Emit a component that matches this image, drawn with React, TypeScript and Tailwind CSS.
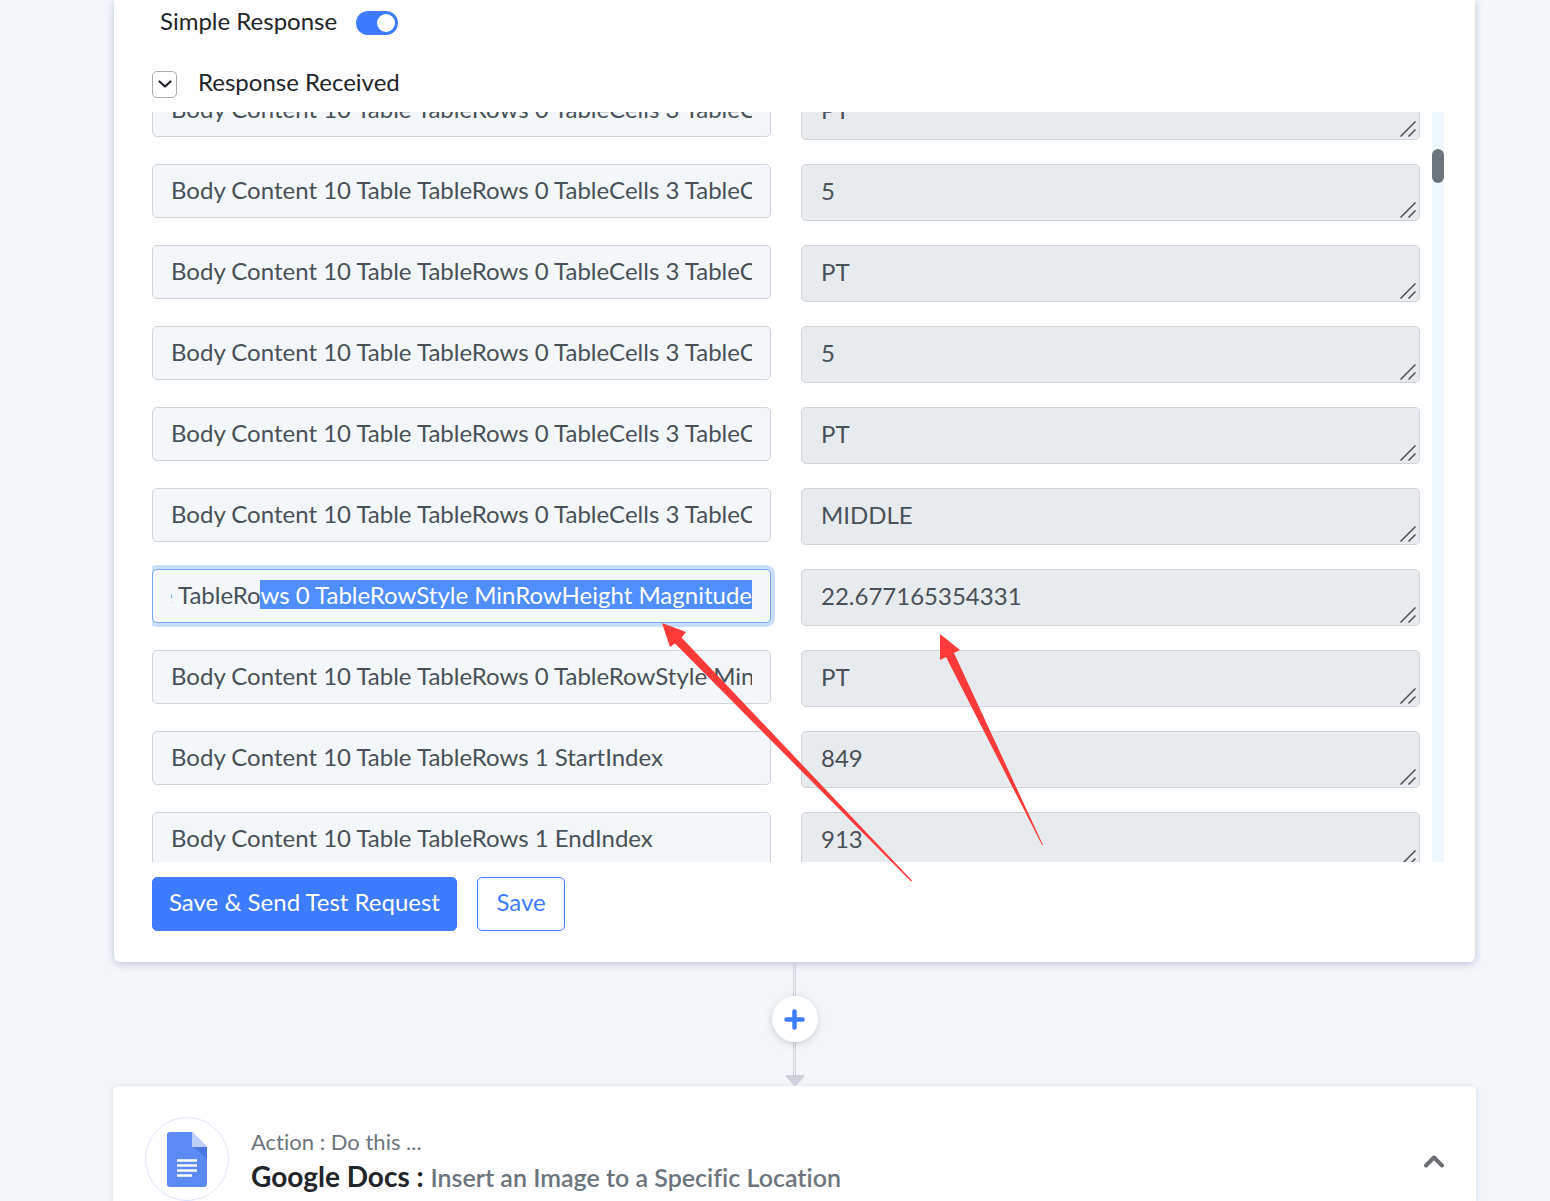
import { useLayoutEffect, useRef } from 'react';

interface ResponseField {
  label: string;
  value: string;
  active?: boolean;
}

const CELL = 'Body Content 10 Table TableRows 0 TableCells 3 TableCellStyle';
const ROW_STYLE = 'Body Content 10 Table TableRows 0 TableRowStyle MinRowHeight';

const FIELDS: ResponseField[] = [
  { label: `${CELL} PaddingLeft Unit`, value: 'PT' },
  { label: `${CELL} PaddingRight Magnitude`, value: '5' },
  { label: `${CELL} PaddingRight Unit`, value: 'PT' },
  { label: `${CELL} PaddingTop Magnitude`, value: '5' },
  { label: `${CELL} PaddingTop Unit`, value: 'PT' },
  { label: `${CELL} ContentAlignment`, value: 'MIDDLE' },
  { label: `${ROW_STYLE} Magnitude`, value: '22.677165354331', active: true },
  { label: `${ROW_STYLE} Unit`, value: 'PT' },
  { label: 'Body Content 10 Table TableRows 1 StartIndex', value: '849' },
  { label: 'Body Content 10 Table TableRows 1 EndIndex', value: '913' },
];

function FieldRow({ label, value, active }: ResponseField) {
  const inputRef = useRef<HTMLInputElement>(null);

  useLayoutEffect(() => {
    const input = inputRef.current;
    if (!active || !input) return;
    input.focus({ preventScroll: true });
    input.setSelectionRange(label.indexOf('ws 0'), label.length);
    input.scrollLeft = input.scrollWidth;
  }, [active, label]);

  return (
    <div className="grid grid-cols-2 gap-[30px] h-[57px] shrink-0">
      <input
        ref={inputRef}
        type="text"
        aria-label="Field name"
        defaultValue={label}
        className={
          active
            ? 'w-full h-[54px] px-[18px] pb-1 rounded-[5px] border border-[#77a7f5] bg-[#f3f7fa] text-[#495057] outline-none ring-4 ring-[#c8dcfc] caret-transparent selection:bg-[#4f8efb] selection:text-white'
            : 'w-full h-[54px] px-[18px] pb-1 rounded-[5px] border border-[#ced4da] bg-[#f3f7fa] text-[#495057] outline-none'
        }
      />
      <div className="relative">
        <textarea
          aria-label={label}
          defaultValue={value}
          readOnly
          rows={1}
          className="block w-full h-[57px] px-[19px] py-2 rounded-[5px] border border-[#ced4da] bg-[#e8ebee] text-[#495057] leading-9 resize-none overflow-hidden outline-none"
        />
        <svg className="absolute right-1 bottom-[3px] w-4 h-4" viewBox="0 0 16 16" fill="none" stroke="#4b4f54" strokeWidth="1.5">
          <path d="M0.5 15.5 15.5 0.5M8.5 15.5 15.5 8.5" />
        </svg>
      </div>
    </div>
  );
}

function ResponseList() {
  const listRef = useRef<HTMLDivElement>(null);

  useLayoutEffect(() => {
    if (listRef.current) listRef.current.scrollTop = 29;
  }, []);

  return (
    <div className="flex h-[750px]">
      <div ref={listRef} className="flex-1 flex flex-col gap-6 pr-3 overflow-hidden">
        {FIELDS.map((field) => (
          <FieldRow key={field.label} {...field} />
        ))}
      </div>
      <div className="w-3 bg-[#eff8ff] pt-[37px]">
        <div className="h-[34px] rounded-full bg-[#6c757d]" />
      </div>
    </div>
  );
}

function DocsIcon() {
  return (
    <svg className="w-10 h-[55px]" viewBox="0 0 40 55" fill="none">
      <path d="M3 0h22l15 15v37a3 3 0 0 1-3 3H3a3 3 0 0 1-3-3V3a3 3 0 0 1 3-3z" fill="#5c8af5" />
      <path d="M27 15h13v12z" fill="#4a76df" />
      <path d="M25 0l15 15H25z" fill="#bccffa" />
      <path d="M10 28.500h20M10 33.500h20M10 38.500h20M10 43.500h15" stroke="#fff" strokeWidth="2.400" />
    </svg>
  );
}

function Connector() {
  return (
    <div className="flex flex-col items-center h-[124px]">
      <div className="w-[3px] h-[34px] border-x border-[#cdd2da]" />
      <button
        type="button"
        aria-label="Add step"
        className="relative z-10 flex items-center justify-center w-[46px] h-[46px] rounded-full bg-white shadow-[0_2px_8px_rgba(0,0,0,0.16)]"
      >
        <svg className="w-[21px] h-[21px]" viewBox="0 0 21 21" stroke="#3d7cff" strokeWidth="4.5" strokeLinecap="round">
          <path d="M10.500 2.500v16M2.500 10.500h16" />
        </svg>
      </button>
      <div className="w-[3px] h-[33px] border-x border-[#cdd2da]" />
      <svg className="w-5 h-[11px]" viewBox="0 0 20 11" fill="#cdd1d9">
        <path d="M1.500 0h17a1 1 0 0 1 .8 1.700l-8 8.600a2 2 0 0 1-2.600 0l-8-8.600A1 1 0 0 1 1.500 0z" />
      </svg>
    </div>
  );
}

function Annotations() {
  return (
    <svg className="absolute left-0 top-0 w-[1100px] h-[900px] pointer-events-none" viewBox="0 0 1100 900" fill="#fd3a3a">
      <path d="M662 623 686 632 681.500 637.500 912 880.500 911 881.500 675 643.500 670 647z" />
      <path d="M940 634 960 650 954 653 1043 845 1042 845 946 657 940 660z" />
    </svg>
  );
}

export default function App() {
  return (
    <div className="relative min-h-screen pl-[114px] pr-[75px] bg-[#f3f7fa] font-['Lato',sans-serif] text-2xl text-[#212529] [font-variant-ligatures:none]">
      <section className="pt-[2px] pl-[38px] pr-[31px] pb-[31px] rounded-b-[6px] bg-white shadow-[0_2px_8px_rgba(110,125,160,0.4)]">
        <label className="flex items-center gap-[19px] h-[42px] pl-2">
          <span className="pb-1">Simple Response</span>
          <input type="checkbox" role="switch" defaultChecked className="peer sr-only" />
          <span className="flex items-center justify-end w-[42px] h-6 p-[3px] rounded-full bg-[#3d7cff]">
            <span className="w-[18px] h-[18px] rounded-full bg-white" />
          </span>
        </label>
        <div className="flex items-center gap-[21px] mt-[19px] h-[42px]">
          <button
            type="button"
            aria-label="Toggle response"
            className="flex items-center justify-center w-[25px] h-[27px] rounded-[5px] border border-[#a9acb0] bg-white"
          >
            <svg className="w-[14px] h-[14px]" viewBox="0 0 14 14" fill="none" stroke="#212529" strokeWidth="2.2" strokeLinecap="round" strokeLinejoin="round">
              <path d="M1.500 4.500 7 9.500 12.500 4.500" />
            </svg>
          </button>
          <h2 className="pb-1">Response Received</h2>
        </div>
        <div className="mt-[7px]">
          <ResponseList />
        </div>
        <div className="flex gap-5 mt-[15px]">
          <button type="button" className="w-[305px] h-[54px] pb-1 rounded-[5px] border border-[#3d7cff] bg-[#3d7cff] text-white">
            Save &amp; Send Test Request
          </button>
          <button type="button" className="w-[88px] h-[54px] pb-1 rounded-[5px] border border-[#3d7cff] bg-white text-[#3d7cff]">
            Save
          </button>
        </div>
      </section>

      <Connector />

      <section className="flex items-start -mx-px pt-[31px] pl-8 pr-[31px] rounded-t-[6px] bg-white shadow-[0_1px_6px_rgba(110,125,160,0.22)]">
        <div className="flex items-center justify-center w-[84px] h-[84px] rounded-full border border-[#dbe4fb]">
          <DocsIcon />
        </div>
        <div className="flex-1 pl-[22px] pt-[11px]">
          <p className="text-[22px] leading-7 text-[#6c757d]">Action : Do this ...</p>
          <h3 className="text-[28px] leading-10 font-bold">
            Google Docs : <span className="text-[25px] font-semibold text-[#6c757d]">Insert an Image to a Specific Location</span>
          </h3>
        </div>
        <button type="button" aria-label="Collapse step" className="mt-[37px]">
          <svg className="w-[22px] h-[14px]" viewBox="0 0 22 14" fill="none" stroke="#6b6f74" strokeWidth="4" strokeLinecap="round" strokeLinejoin="round">
            <path d="M3 11.500 11 3.500 19 11.500" />
          </svg>
        </button>
      </section>

      <Annotations />
    </div>
  );
}
